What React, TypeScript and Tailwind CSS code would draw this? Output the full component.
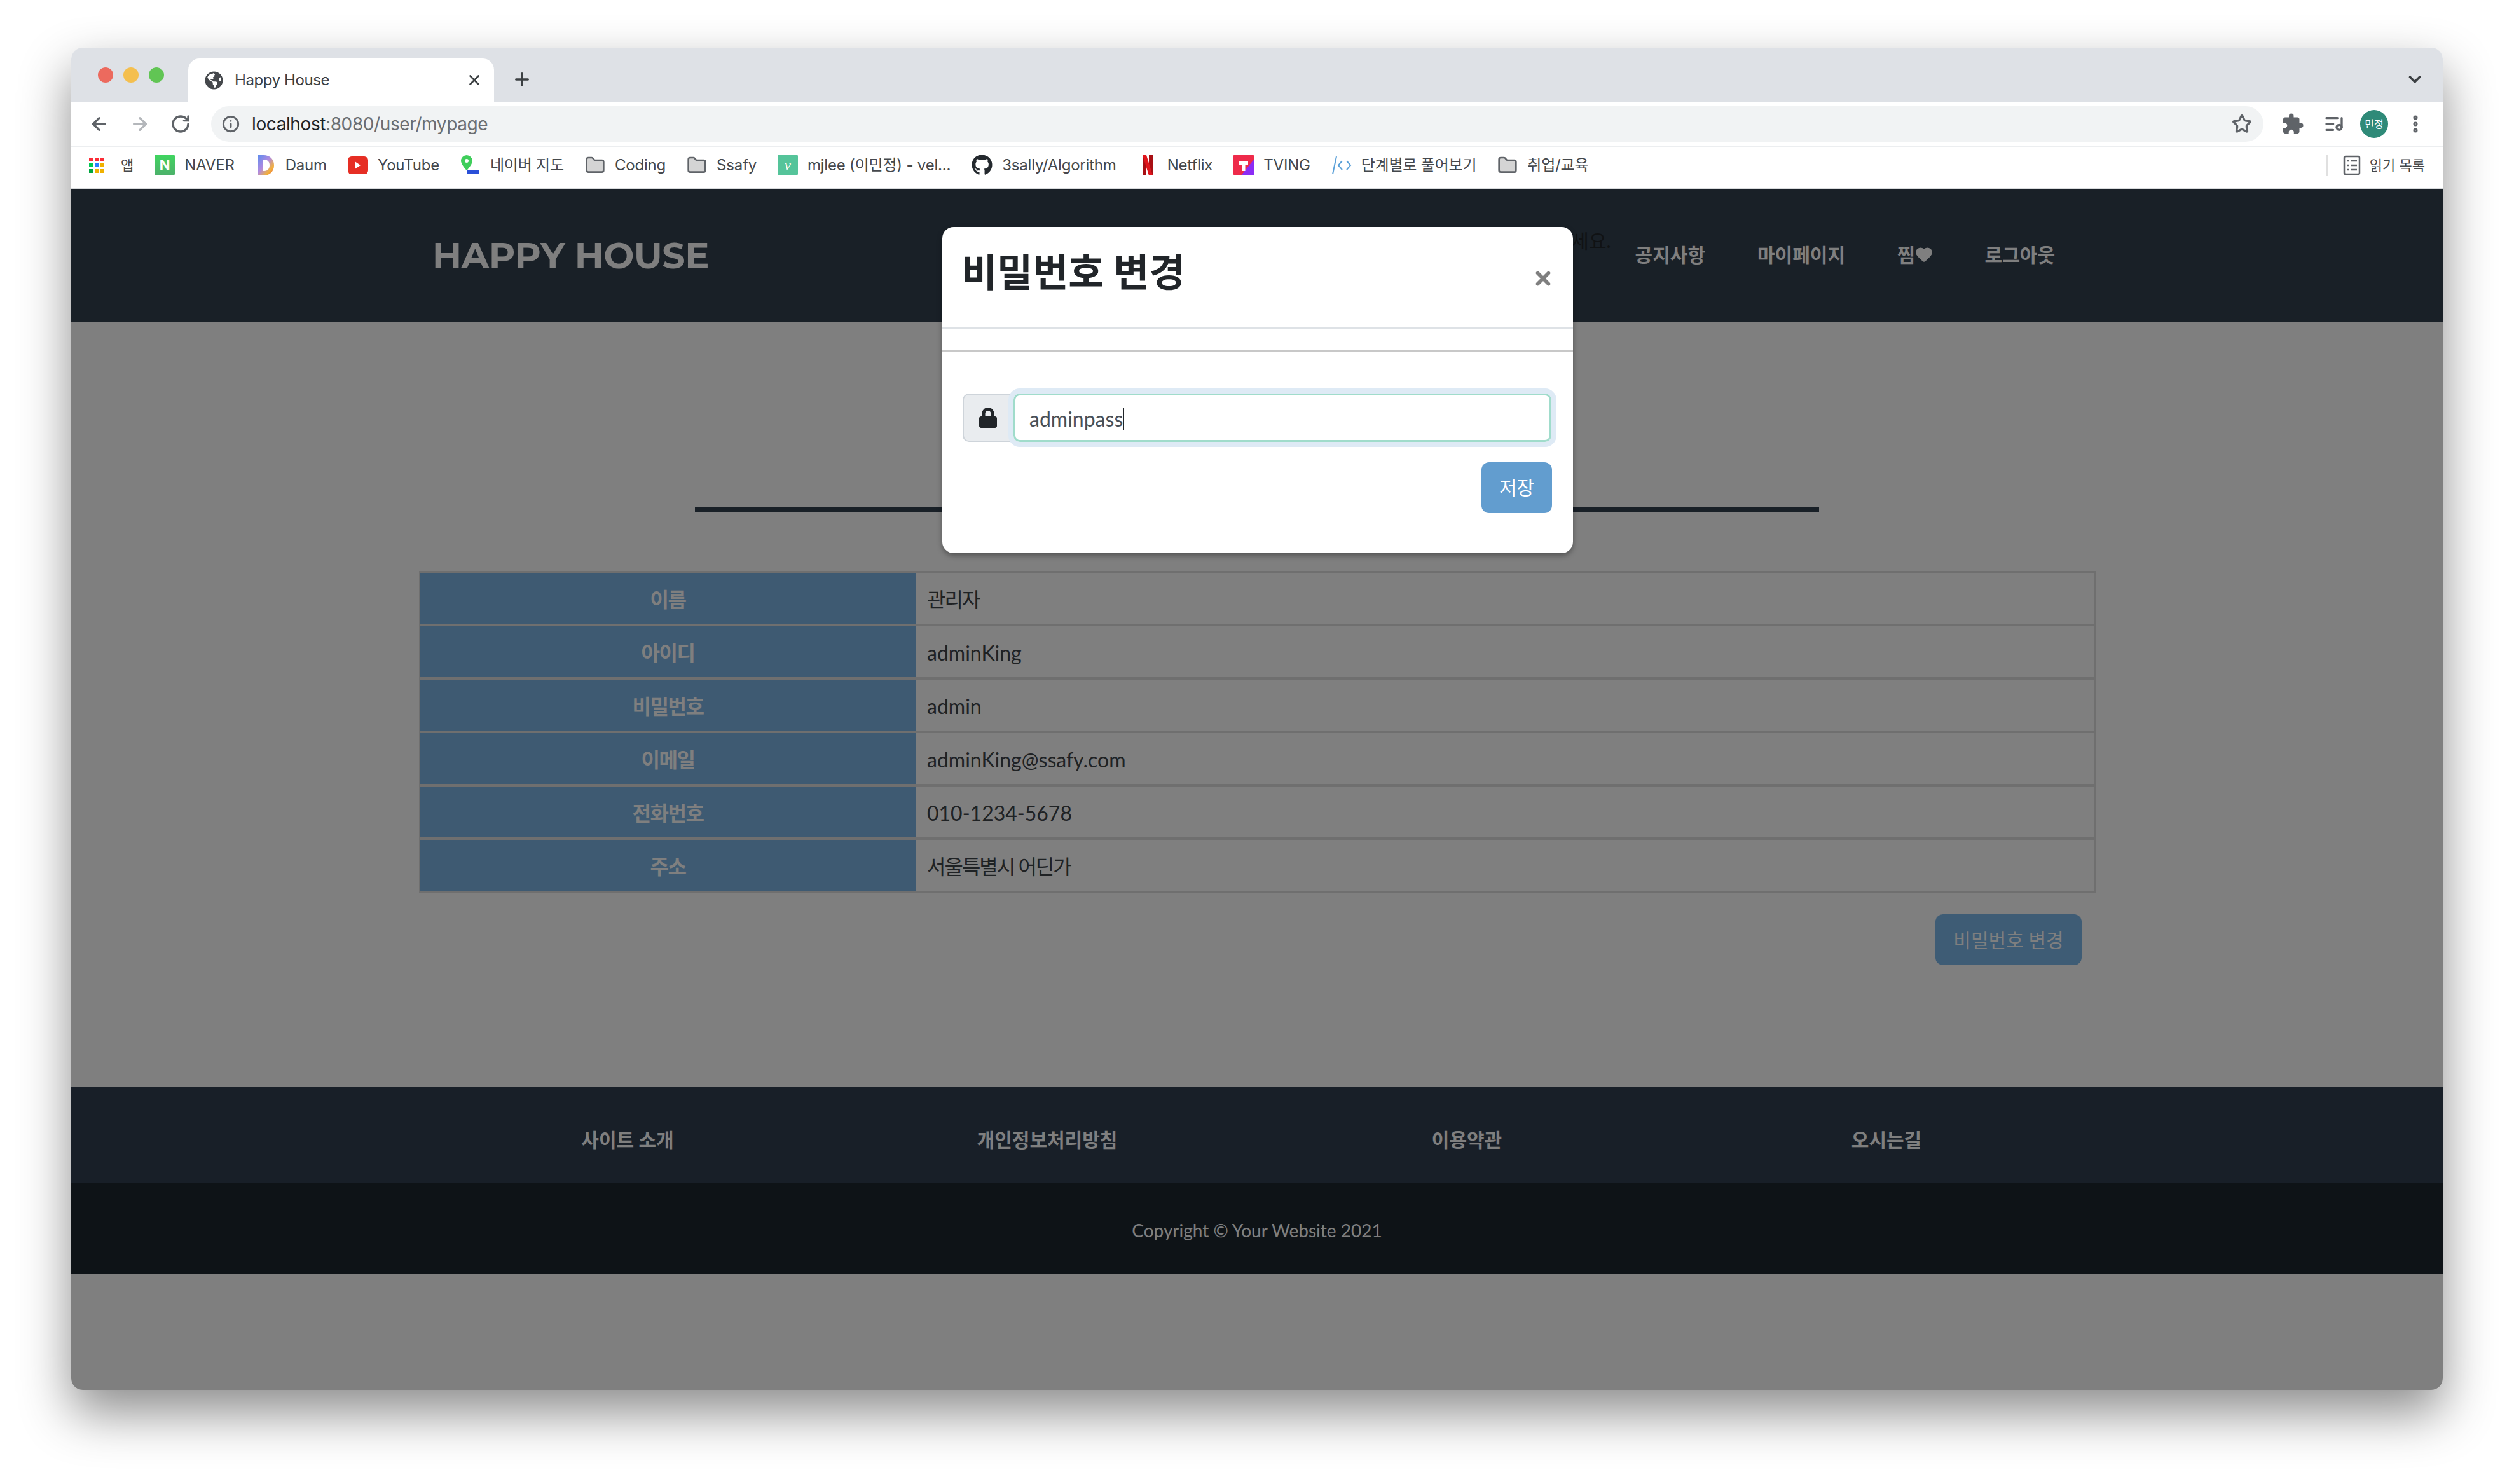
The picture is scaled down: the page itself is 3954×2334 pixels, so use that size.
import React from 'react';
import { ArrowLeft, ArrowRight, RotateCw, Info, Star, ListMusic, MoreVertical, ChevronDown, Plus, X, Folder, Heart } from 'lucide-react';
import { FaGithub, FaGlobeAmericas, FaLock } from 'react-icons/fa';
import { MdExtension } from 'react-icons/md';

const uiFont = "font-['Inter','Noto_Sans_CJK_KR',sans-serif]";
const pageFont = "font-['Lato','Noto_Sans_CJK_KR',sans-serif]";

function Bookmark({ icon, label, className }: { icon: React.ReactNode; label: string; className?: string }) {
  return (
    <div className={`flex items-center gap-[15px] ${className ?? ''}`}>
      {icon}
      <span className="text-[24px] leading-none tracking-[-0.2px] text-[#45484c] whitespace-nowrap">{label}</span>
    </div>
  );
}

function Tile({ bg, children }: { bg: string; children: React.ReactNode }) {
  return (
    <span className={`flex h-[33px] w-[32px] items-center justify-center rounded-[3px] text-[22px] font-bold text-white ${bg}`}>
      {children}
    </span>
  );
}

const folder = <Folder size={32} className="text-[#5f6368] fill-[#d4d4d4]" strokeWidth={2} />;

const daumLogo = (
  <svg width="32" height="34" viewBox="0 0 32 34">
    <defs>
      <linearGradient id="daum" x1="0" y1="0" x2="1" y2="1">
        <stop offset="0%" stopColor="#5b8def" />
        <stop offset="45%" stopColor="#b08ae0" />
        <stop offset="75%" stopColor="#f2b13c" />
        <stop offset="100%" stopColor="#e8583c" />
      </linearGradient>
    </defs>
    <path d="M3 1h10c10 0 16 7 16 16s-6 16-16 16H3z M11 8v18h3c5 0 8-4 8-9s-3-9-8-9z" fill="url(#daum)" fillRule="evenodd" />
  </svg>
);

const mapLogo = (
  <svg width="32" height="34" viewBox="0 0 32 34">
    <path d="M10 1a9 9 0 0 1 9 9c0 6-9 15-9 15S1 16 1 10a9 9 0 0 1 9-9z" fill="#3fce5b" />
    <circle cx="10" cy="10" r="3" fill="#fff" />
    <rect x="10" y="25" width="20" height="5" fill="#2a50d8" />
  </svg>
);

const netflixLogo = (
  <svg width="32" height="34" viewBox="0 0 32 34">
    <path d="M8 1h6v32H8z" fill="#a80f14" />
    <path d="M18 1h6v32h-6z" fill="#a80f14" />
    <path d="M8 1h6l10 32h-6z" fill="#e0151c" />
  </svg>
);

const tvingLogo = (
  <svg width="32" height="33" viewBox="0 0 32 33">
    <rect width="32" height="33" rx="2" fill="#ee2a4a" />
    <path d="M32 8v25H12z" fill="#8b2cf5" />
    <path d="M9 11h14v5h-4.500v10h-5V16H9z" fill="#fff" />
  </svg>
);

const codeLogo = (
  <svg width="32" height="34" viewBox="0 0 32 34" fill="none" stroke="#5aa0d8" strokeWidth="2">
    <path d="M8 3 2 31" />
    <path d="M17 10l-6 7 6 7" />
    <path d="M24 10l6 7-6 7" />
  </svg>
);

const readingList = (
  <svg width="28" height="32" viewBox="0 0 28 32" fill="none" stroke="#5f6368" strokeWidth="2.500">
    <rect x="2" y="2" width="24" height="28" rx="2" />
    <path d="M6 9h3M12 9h10M6 16h3M12 16h10M6 23h3M12 23h10" />
  </svg>
);

const rows = [
  ['이름', '관리자', 'tracking-[-2px]'],
  ['아이디', 'adminKing', ''],
  ['비밀번호', 'admin', ''],
  ['이메일', 'adminKing@ssafy.com', ''],
  ['전화번호', '010-1234-5678', ''],
  ['주소', '서울특별시 어딘가', 'tracking-[-2px]'],
];

const footerLinks = ['사이트 소개', '개인정보처리방침', '이용약관', '오시는길'];

export default function App() {
  return (
    <div className={`min-h-[2334px] w-[3954px] bg-white pl-[112px] pt-[75px] ${uiFont}`}>
      <div className="flex h-[2111px] w-[3730px] flex-col overflow-hidden rounded-[18px] bg-white shadow-[0_36px_80px_rgba(0,0,0,0.45)]">
        {/* tab strip */}
        <div className="flex h-[85px] shrink-0 items-end bg-[#dee1e6] pl-[42px]">
          <div className="mb-[30px] mr-[38px] flex gap-[16px]">
            <span className="h-[24px] w-[24px] rounded-full bg-[#ec6a5e]" />
            <span className="h-[24px] w-[24px] rounded-full bg-[#f4bf4f]" />
            <span className="h-[24px] w-[24px] rounded-full bg-[#61c554]" />
          </div>
          <div className="flex h-[68px] w-[481px] items-center gap-[18px] rounded-t-[18px] bg-white pl-[26px] pr-[18px]">
            <FaGlobeAmericas size={29} className="text-[#45484c]" />
            <span className="flex-1 text-[24px] tracking-[-0.4px] text-[#3c4043]">Happy House</span>
            <X size={26} className="text-[#3c4043]" strokeWidth={2.5} />
          </div>
          <div className="mb-[19px] ml-[28px] flex-1">
            <Plus size={32} className="text-[#3c4043]" strokeWidth={2.5} />
          </div>
          <ChevronDown size={30} className="mb-[20px] mr-[29px] text-[#3c4043]" strokeWidth={3} />
        </div>

        {/* toolbar */}
        <div className="flex h-[71px] shrink-0 items-center border-b-2 border-[#eceef0] pl-[28px]">
          <ArrowLeft size={32} className="text-[#5f6368]" strokeWidth={2.5} />
          <ArrowRight size={32} className="ml-[32px] text-[#b4b7bb]" strokeWidth={2.5} />
          <RotateCw size={32} className="ml-[32px] text-[#5f6368]" strokeWidth={2.5} />
          <div className="ml-[32px] flex h-[56px] w-[3228px] items-center rounded-full bg-[#f1f3f4] pl-[17px] pr-[18px]">
            <Info size={28} className="text-[#5f6368]" strokeWidth={2.5} />
            <span className="ml-[19px] flex-1 text-[28px] tracking-[-0.4px] text-[#6b6e72]">
              <span className="text-[#202124]">localhost</span>:8080/user/mypage
            </span>
            <Star size={32} className="text-[#5f6368]" strokeWidth={2.5} />
          </div>
          <MdExtension size={36} className="ml-[28px] text-[#5f6368]" />
          <ListMusic size={32} className="ml-[31px] text-[#5f6368]" strokeWidth={2.5} />
          <span className="ml-[25px] flex h-[44px] w-[44px] items-center justify-center rounded-full bg-[#2f8a78] text-[16px] text-white">민정</span>
          <MoreVertical size={34} className="ml-[26px] text-[#5f6368]" strokeWidth={3} />
        </div>

        {/* bookmarks */}
        <div className="flex h-[67px] shrink-0 items-center gap-[33px] border-b-2 border-[#d9dbdd] pb-[8px] pl-[28px] pr-[28px]">
          <div className="flex items-center gap-[26px]">
            <div className="grid grid-cols-3 gap-[3px]">
              {['bg-red-500', 'bg-red-500', 'bg-red-500', 'bg-green-500', 'bg-blue-500', 'bg-yellow-500', 'bg-green-600', 'bg-yellow-500', 'bg-yellow-500'].map((c, i) => (
                <span key={i} className={`h-[6px] w-[6px] ${c}`} />
              ))}
            </div>
            <span className="text-[22px] leading-none text-[#45484c]">앱</span>
          </div>
          <Bookmark icon={<Tile bg="bg-gradient-to-b from-[#3ed65f] to-[#4cb06a]">N</Tile>} label="NAVER" />
          <Bookmark icon={daumLogo} label="Daum" />
          <Bookmark icon={<span className="flex h-[28px] w-[32px] items-center justify-center rounded-[6px] bg-[#e62e24]"><span className="h-0 w-0 border-y-[6px] border-l-[9px] border-y-transparent border-l-white" /></span>} label="YouTube" />
          <Bookmark icon={mapLogo} label="네이버 지도" />
          <Bookmark icon={folder} label="Coding" />
          <Bookmark icon={folder} label="Ssafy" />
          <Bookmark icon={<Tile bg="bg-[#55c49a]"><span className="font-['Liberation_Serif',serif] font-normal italic">v</span></Tile>} label="mjlee (이민정) - vel..." />
          <Bookmark icon={<FaGithub size={33} className="text-[#24292e]" />} label="3sally/Algorithm" />
          <Bookmark icon={netflixLogo} label="Netflix" />
          <Bookmark icon={tvingLogo} label="TVING" />
          <Bookmark icon={codeLogo} label="단계별로 풀어보기" />
          <Bookmark icon={folder} label="취업/교육" className="flex-1" />
          <div className="flex h-[34px] items-center gap-[14px] border-l-2 border-[#e0e0e0] pl-[24px]">
            {readingList}
            <span className="text-[22px] leading-none text-[#45484c]">읽기 목록</span>
          </div>
        </div>

        {/* page */}
        <div className={`relative flex flex-1 flex-col bg-white ${pageFont}`}>
          <header className="flex h-[208px] shrink-0 items-center bg-[#32404f] pl-[568px]">
            <span className="flex-1 font-['Montserrat','Inter',sans-serif] text-[57px] font-bold tracking-[-0.5px] text-white">HAPPY HOUSE</span>
            <nav className="mb-[4px] flex items-center gap-[82px] pr-[610px] text-[30px] font-bold text-white">
              <span className="-mr-[44px] mb-[44px] font-normal text-[#212529]">관리자님 안녕하세요.</span>
              <span>공지사항</span>
              <span>마이페이지</span>
              <span className="flex items-center">찜<Heart size={28} className="fill-white" /></span>
              <span>로그아웃</span>
            </nav>
          </header>

          <main className="flex h-[1204px] shrink-0 flex-col">
            <div className="mx-auto mt-[292px] h-[8px] w-[1768px] bg-[#32404f]" />
            <div className="ml-[547px] mt-[92px] w-[2637px] border-x-2 border-y-[3px] border-[#dedede]">
              {rows.map(([label, value, tracking]) => (
                <div key={label} className="flex h-[84px] border-b-4 border-[#dedede] last:h-[81px] last:border-b-0">
                  <div className="flex w-[779px] items-center justify-center bg-[#7cb4e4] pt-[3px] text-[32px] font-bold tracking-[-1.5px] text-white">
                    {label}
                  </div>
                  <div className={`flex flex-1 items-center pl-[18px] pt-[3px] text-[32px] text-[#3f4449] ${tracking}`}>{value}</div>
                </div>
              ))}
            </div>
            <div className="ml-[2932px] mt-[33px] flex h-[80px] w-[230px] items-center justify-center rounded-[12px] bg-[#7cb8ea] text-[30px] text-white">
              비밀번호 변경
            </div>
          </main>

          <footer className="flex h-[150px] shrink-0 items-center bg-[#313f50] pt-[14px] text-[30px] font-bold text-white">
            <div className="ml-[545px] grid w-[2640px] grid-cols-4 text-center">
              {footerLinks.map((f) => (
                <span key={f}>{f}</span>
              ))}
            </div>
          </footer>
          <div className="flex h-[144px] shrink-0 items-center justify-center bg-[#1c262e] pt-[6px] text-[28px] text-white">
            Copyright © Your Website 2021
          </div>

          {/* backdrop */}
          <div className="absolute inset-0 bg-black/50" />

          {/* modal */}
          <div className="absolute left-[1370px] top-[59px] h-[513px] w-[992px] rounded-[18px] bg-white shadow-[0_4px_8px_rgba(0,0,0,0.35)]">
            <div className="flex h-[160px] items-start justify-between border-b-2 border-[#dee2e6] pl-[30px] pr-[30px]">
              <span className="mt-[34px] text-[61px] font-bold leading-[1.2] text-[#212529]">비밀번호 변경</span>
              <X size={34} className="mt-[64px] text-[#7f7f7f]" strokeWidth={4} />
            </div>
            <div className="h-[36px] border-b-2 border-[#c8c8c8]" />
            <div className="ml-[32px] mt-[66px] flex h-[76px] w-[926px]">
              <div className="flex w-[80px] items-center justify-center rounded-l-[10px] border-2 border-[#ced4da] bg-[#e9ecef]">
                <FaLock size={32} className="text-[#212529]" />
              </div>
              <div className="flex flex-1 items-center rounded-[10px] border-[3px] border-[#a0dccb] pl-[22px] pt-[3px] text-[32px] text-[#495057] shadow-[0_0_0_8px_#deeaf5]">
                adminpass<span className="h-[36px] w-[2px] bg-[#212529]" />
              </div>
            </div>
            <div className="ml-[848px] mt-[32px] flex h-[80px] w-[111px] items-center justify-center rounded-[12px] bg-[#629dcf] pb-[2px] text-[30px] text-white">
              저장
            </div>
          </div>
        </div>
      </div>
    </div>
  );
}
